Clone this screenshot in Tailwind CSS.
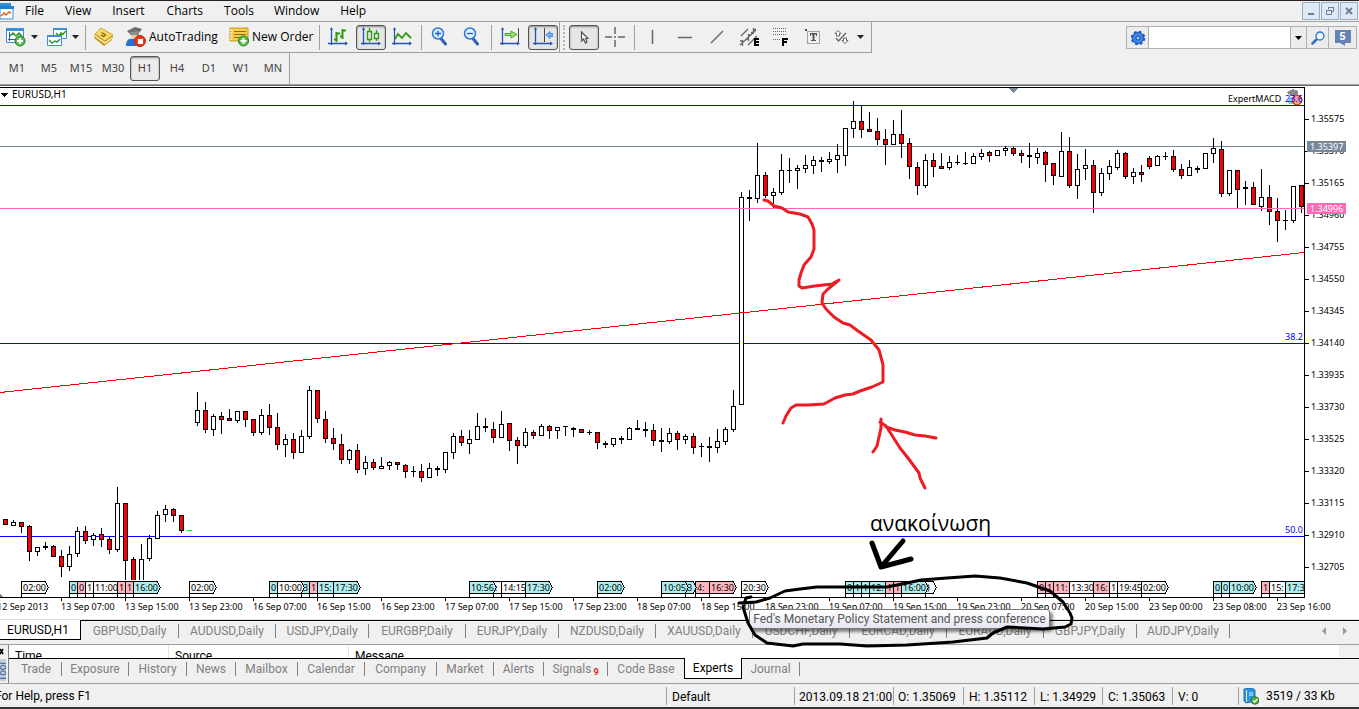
<!DOCTYPE html>
<html lang="en">
<head>
<meta charset="utf-8">
<title>EURUSD,H1</title>
<script src="https://cdn.jsdelivr.net/npm/@tailwindcss/browser@4"></script>
</head>
<body class="relative flex h-screen flex-col overflow-hidden border-t border-[#2b2124] bg-[#f0f0f0] font-['Roboto','Noto_Sans',sans-serif] text-[12px] text-black">

<!-- Menu bar -->
<header class="flex h-[21px] shrink-0 items-center border-b border-[#a0a0a0] font-['Open_Sans','Noto_Sans',sans-serif]">
  <svg class="h-5 w-[14px]" viewBox="0 0 14 20"><path d="M0 2h11v4H0z" fill="#2f8fd8"/><path d="M0 6h13v12H0z" fill="#fff" stroke="#2f8fd8"/><path d="M0 5h14v3H0z" fill="#1f7fd0"/><path d="M1 15l3-3 2 2 3-3 2 1" fill="none" stroke="#e8622a" stroke-width="1.5"/></svg>
  <nav class="flex flex-1">
    <button class="px-[11px]">File</button><button class="px-[10px]">View</button><button class="px-[11px]">Insert</button><button class="px-[11px]">Charts</button><button class="px-[10px]">Tools</button><button class="px-[10px]">Window</button><button class="px-[11px]">Help</button>
  </nav>
  <div class="flex gap-px pr-px">
    <button aria-label="Minimize" class="flex h-[18px] w-[18px] items-center justify-center border border-[#9aacc2] bg-[#dfe9f5]"><svg width="10" height="10"><path d="M2 7h6v2H2z" fill="#6e7f92"/></svg></button>
    <button aria-label="Restore" class="flex h-[18px] w-[18px] items-center justify-center border border-[#9aacc2] bg-[#dfe9f5]"><svg width="10" height="10"><path d="M3.500 3.500V1.500h5v4h-2M1.500 4.500h5v4h-5z" fill="none" stroke="#6e7f92"/><path d="M1 4h6v1H1zM3 1h6v1H3z" fill="#6e7f92"/></svg></button>
    <button aria-label="Close" class="flex h-[18px] w-[18px] items-center justify-center border border-[#9aacc2] bg-[#dfe9f5]"><svg width="10" height="10"><path d="M2 2l6 6M8 2l-6 6" stroke="#6e7f92" stroke-width="2"/></svg></button>
  </div>
</header>

<!-- Main toolbar -->
<div class="flex h-[31px] shrink-0">
  <div class="flex h-[31px] w-[560px] shrink-0 items-center border-r border-b border-[#a0a0a0]">
    <button aria-label="New chart" class="ml-[6px] flex w-[41px] items-center gap-[5px]">
      <svg width="20" height="20"><path d="M.5 1.500h17v14H.5z" fill="#fff" stroke="#3a8fd8"/><path d="M0 1h18v3H0z" fill="#3a8fd8"/><path d="M3.500 5v9M2 12.500h13" stroke="#2a62b8" fill="none"/><path d="M4 9l3-3 3 3 3-3 3 3" stroke="#2f9a20" fill="none" stroke-width="1.500"/><circle cx="14" cy="14" r="5" fill="#58bf4e" stroke="#23801f"/><path d="M14 11v6M11 14h6" stroke="#fff" stroke-width="2"/></svg>
      <svg width="8" height="4"><path d="M0 0h7L3.500 4z" fill="#222"/></svg>
    </button>
    <button aria-label="Profiles" class="flex w-[38px] items-center gap-[5px]">
      <svg width="20" height="20"><path d="M6.500 1.500h13v10h-13z" fill="#fff" stroke="#3a8fd8"/><path d="M6 1h14v2H6z" fill="#3a8fd8"/><path d="M9 6l3 3 2-3 2 1 3-3" fill="none" stroke="#2f9a20" stroke-width="1.500"/><path d="M.5 8.500h14v10H.5z" fill="#fff" stroke="#3a8fd8"/><path d="M0 8h15v2H0z" fill="#3a8fd8"/><path d="M2 13l3 3 3-2 2 1 3-3" fill="none" stroke="#2f9a20" stroke-width="1.500"/></svg>
      <svg width="8" height="4"><path d="M0 0h7L3.500 4z" fill="#222"/></svg>
    </button>
    <span class="h-[25px] w-px bg-[#a0a0a0]"></span>
    <button aria-label="MQL editor" class="ml-[7px] w-[33px]"><svg width="21" height="20"><path d="M8 1l12 7-1 5-8 6L1 11l1-4z" fill="#c99a1c"/><path d="M8 1l12 7-8 6L2 7z" fill="#f4d96a" stroke="#c9971e" stroke-width=".7"/><path d="M2 9l10 7 7-5" stroke="#fff7d0" fill="none" stroke-width="1.300"/><path d="M8.500 5.500l4 2.500-2 1.500M8 8l3 2" fill="none" stroke="#8f6410" stroke-width="1.300"/></svg></button>
    <button class="flex w-[103px] items-center gap-[3px] font-['Open_Sans','Noto_Sans',sans-serif] whitespace-nowrap"><svg class="shrink-0" width="20" height="20"><path d="M1 4l8-4 7 2-3 4-9 1z" fill="#6b6b6b"/><path d="M4 5l9-1v4l-4 3-5-3z" fill="#8f8f8f"/><path d="M5 8h6l-1 4-3 1z" fill="#f0c99a"/><path d="M0 19c0-7 4-8 7-7l4-1v8z" fill="#2a72cf"/><circle cx="14" cy="14" r="5.500" fill="#e33b1d" stroke="#b32c12"/><path d="M12 12h5v5h-5z" fill="#fff"/></svg>AutoTrading</button>
    <button class="flex w-[90px] items-center gap-[3px] font-['Open_Sans','Noto_Sans',sans-serif] whitespace-nowrap"><svg class="shrink-0" width="20" height="20"><path d="M1 1h18v13H1z" fill="#f3cf4b" stroke="#c2961a"/><path d="M5 4.500h12M5 7.500h12M5 10.500h8" stroke="#8a6a14"/><path d="M1 3h2M1 6h2M1 9h2M1 12h2" stroke="#fff"/><circle cx="14.500" cy="14" r="5" fill="#58bf4e" stroke="#23801f"/><path d="M14.500 11v6M11.500 14h6" stroke="#fff" stroke-width="2"/></svg>New Order</button>
    <span class="h-[25px] w-px bg-[#a0a0a0]"></span>
    <button aria-label="Bar chart" class="ml-2 w-7"><svg width="20" height="20"><path d="M3.500 1v17M0 16.500h19" stroke="#2455b5" stroke-width="1.300"/><path d="M2 3l1.500-3L5 3zM17 14.500l3 2-3 2z" fill="#2455b5"/><path d="M8.500 5v10M6 12.500h2.500M8.500 6.500H12M14.500 2v10M12 9.500h2.500M14.500 3.500H18" stroke="#2f9a10" stroke-width="2" fill="none"/></svg></button>
    <button aria-label="Candlesticks" aria-pressed="true" class="flex h-[25px] w-[30px] items-center justify-center rounded-[3px] border border-[#555] bg-[#e6e6e6] shadow-[inset_0_1px_2px_#888]"><svg width="20" height="20"><path d="M2.500 1v17M0 16.500h18" stroke="#2455b5" stroke-width="1.300"/><path d="M1 3l1.500-3L4 3zM17 14.500l3 2-3 2z" fill="#2455b5"/><path d="M8.500 1v3M8.500 12v3M15.500 3v3M15.500 11v3M6.500 4.500h4v8h-4zM13.500 6.500h4v5h-4z" fill="none" stroke="#2f9a10" stroke-width="1.300"/></svg></button>
    <button aria-label="Line chart" class="ml-[6px] w-[29px]"><svg width="20" height="20"><path d="M2.500 1v17M0 16.500h19" stroke="#2455b5" stroke-width="1.300"/><path d="M1 3l1.500-3L4 3zM17 14.500l3 2-3 2z" fill="#2455b5"/><path d="M3 12l3-5 4 4 4-5 5 5" fill="none" stroke="#2f9a10" stroke-width="1.800"/></svg></button>
    <span class="h-[25px] w-px bg-[#a0a0a0]"></span>
    <button aria-label="Zoom in" class="ml-[9px] w-8"><svg width="17" height="20"><path d="M9.500 11l5 6" stroke="#2f62b8" stroke-width="3" stroke-linecap="round"/><circle cx="7" cy="6.500" r="5.500" fill="#dff0ff" stroke="#2d78d6" stroke-width="1.500"/><path d="M4 6.500h6M7 3.500v6" stroke="#1e5fc4" stroke-width="1.300"/></svg></button>
    <button aria-label="Zoom out" class="w-7"><svg width="17" height="20"><path d="M9.500 11l5 6" stroke="#2f62b8" stroke-width="3" stroke-linecap="round"/><circle cx="7" cy="6.500" r="5.500" fill="#dff0ff" stroke="#2d78d6" stroke-width="1.500"/><path d="M4 6.500h6" stroke="#1e5fc4" stroke-width="1.300"/></svg></button>
    <span class="h-[25px] w-px bg-[#a0a0a0]"></span>
    <button aria-label="Auto scroll" class="ml-2 w-7"><svg width="20" height="20"><path d="M2.500 1v17M0 16.500h18" stroke="#2455b5" stroke-width="1.300"/><path d="M1 3l1.500-3L4 3zM17 14.500l3 2-3 2z" fill="#2455b5"/><path d="M18.500 1v14" stroke="#444"/><path d="M5 6.500h6V4l6 3.500-6 3.500V8.500H5z" fill="#9be070" stroke="#2f9a10" stroke-width=".8"/></svg></button>
    <button aria-label="Chart shift" aria-pressed="true" class="flex h-[25px] w-[30px] items-center justify-center rounded-[3px] border border-[#555] bg-[#e6e6e6] shadow-[inset_0_1px_2px_#888]"><svg width="20" height="20"><path d="M2.500 1v17M0 16.500h18" stroke="#2455b5" stroke-width="1.300"/><path d="M1 3l1.500-3L4 3zM17 14.500l3 2-3 2z" fill="#2455b5"/><path d="M11.500 1v14" stroke="#444"/><path d="M20 6.500h-3V4.500l-4 3.500 4 3.500V9.500h3z" fill="#7db4ef" stroke="#2d78d6" stroke-width=".8"/></svg></button>
  </div>
  <div class="flex h-[31px] w-[312px] shrink-0 items-center border-r border-b border-[#a0a0a0]">
    <span class="ml-[2px] h-[25px] w-[3px] border-r-2 border-dotted border-[#b4b4b4]"></span>
    <button aria-label="Cursor" aria-pressed="true" class="ml-1 flex h-[25px] w-[30px] items-center justify-center rounded-[3px] border border-[#555] bg-[#e6e6e6] shadow-[inset_0_1px_2px_#888]"><svg width="12" height="16"><path d="M3.500 3v9l2-2 2 4 1.500-1-1.500-3.500h2.500z" fill="#fff" stroke="#555" stroke-width="1.200"/></svg></button>
    <button aria-label="Crosshair" class="ml-[6px] w-[29px]"><svg width="20" height="20"><path d="M10 0v7M10 13v7M0 10h7M13 10h7M9 10h2" stroke="#666" stroke-width="1.500"/></svg></button>
    <span class="h-[25px] w-px bg-[#a0a0a0]"></span>
    <button aria-label="Vertical line" class="flex w-[34px] justify-center"><svg width="10" height="14"><path d="M5.500 0v14" stroke="#666" stroke-width="1.500"/></svg></button>
    <button aria-label="Horizontal line" class="flex w-8 justify-center"><svg width="14" height="10"><path d="M0 5.500h14" stroke="#666" stroke-width="1.500"/></svg></button>
    <button aria-label="Trendline" class="flex w-8 justify-center"><svg width="14" height="14"><path d="M1 13L13 1" stroke="#666" stroke-width="1.500"/></svg></button>
    <button aria-label="Equidistant channel" class="flex w-8 justify-center"><svg width="20" height="20"><path d="M2 9l7-7M1 18L17 3M9 18l9-9M3.500 19v-6M1 14h2.500M9.500 14V7M7 12h2.500M9.500 8H12M14.500 7V1M12 5.500h2.500M14.500 2.500H17" stroke="#666" stroke-width="1.300" fill="none"/><path d="M15 11h5v2h-3v1h3v2h-3v1h3v2h-5z" fill="#000"/></svg></button>
    <button aria-label="Fibonacci retracement" class="flex w-8 justify-center"><svg width="16" height="20"><path d="M0 1.500h14M0 4.500h14M0 7.500h14M0 12.500h8" stroke="#666" stroke-width="1" stroke-dasharray="1 1"/><path d="M9 11h6v2h-4v1h3v2h-3v3H9z" fill="#000"/></svg></button>
    <button aria-label="Text label" class="flex w-8 justify-center"><svg width="16" height="16"><path d="M2.500 2.500h12v12h-12z" fill="none" stroke="#555" stroke-dasharray="1 1"/><path d="M0 0h2v2H0z" fill="#444"/><path d="M5 4h7v3h-1V5.500H9.500V11H11v1H6v-1h1.500V5.500H6V7H5z" fill="#555"/></svg></button>
    <button aria-label="Arrows" class="flex w-10 items-center justify-center gap-2"><svg width="15" height="16"><path d="M4 1.500L7 4.500H5.500V7h-3V4.500H1zM11 14.500l3-3h-1.500V9h-3v2.500H8z" fill="#fff" stroke="#666"/><path d="M2 9l2.500 3L12 4" fill="none" stroke="#666" stroke-width="1.300"/></svg><svg width="8" height="4"><path d="M0 0h7L3.500 4z" fill="#222"/></svg></button>
  </div>
  <div class="flex flex-1 items-center justify-end pr-[2px]">
    <form class="flex h-[23px] border border-[#b0b0b0] bg-[#ececec]" onsubmit="return false">
      <button aria-label="Search options" class="flex w-[22px] items-center justify-center border-r border-[#b0b0b0]"><svg width="16" height="16"><circle cx="8" cy="8" r="6" fill="#2d7be0" stroke="#1c58b8" stroke-width="2.500" stroke-dasharray="2.700 2"/><circle cx="8" cy="8" r="5.500" fill="#3f86e0" stroke="#1c58b8" stroke-width=".8"/><circle cx="8" cy="8" r="2" fill="#a8ccf5" stroke="#174c9c"/></svg></button>
      <input aria-label="Search" class="w-[141px] bg-white outline-none">
      <button aria-label="History" class="flex w-4 items-center justify-center border-l border-[#b0b0b0]"><svg width="7" height="4"><path d="M0 0h7L3.500 4z" fill="#000"/></svg></button>
      <button aria-label="Find" class="flex w-[22px] items-center justify-center border-l border-[#b0b0b0]"><svg width="14" height="14"><path d="M5.500 8.500L1.500 12.500" stroke="#2d6fd0" stroke-width="2.500" stroke-linecap="round"/><circle cx="9" cy="5" r="4" fill="#f2f8ff" stroke="#2d6fd0" stroke-width="1.300"/></svg></button>
      <button aria-label="Messages" class="flex w-7 flex-col items-center justify-center border-l border-[#b0b0b0]"><span class="flex h-[13px] w-4 items-center justify-center bg-[#6482b4] text-[11px] leading-none font-bold text-white">5</span><svg width="6" height="3"><path d="M0 0h5v3z" fill="#6482b4"/></svg></button>
    </form>
  </div>
</div>

<!-- Timeframes -->
<div class="flex h-8 shrink-0 border-b border-[#a0a0a0] font-['Noto_Sans',sans-serif] text-[11px] text-[#444]">
  <div class="flex items-center border-r border-[#a0a0a0] pl-px">
    <button class="w-8">M1</button><button class="w-8">M5</button><button class="w-8">M15</button><button class="w-8">M30</button><button aria-pressed="true" class="mx-px h-[25px] w-[30px] rounded-[3px] border border-[#555] bg-[#ebebeb] shadow-[inset_0_1px_2px_#888]">H1</button><button class="w-8">H4</button><button class="w-8">D1</button><button class="w-8">W1</button><button class="w-8">MN</button>
  </div>
</div>

<!-- Chart window -->
<main class="flex min-h-0 flex-1 flex-col overflow-hidden border-t border-b border-t-[#696969] border-b-[#e0e0e0] bg-white font-['Noto_Sans',sans-serif]">
  <div class="flex min-h-0 flex-1 pt-px">
    <svg id="plot" class="h-full min-w-0 flex-1 border-t border-b border-black" aria-label="EURUSD hourly candles"></svg>
    <div class="relative w-[55px] shrink-0 border-l border-black text-[9px]">
      <div class="flex flex-col pt-4" id="prices"></div>
      <span class="absolute top-[54px] left-[2px] flex h-[11px] w-[39px] items-center bg-[#778899] pl-[3px] text-white">1.35397</span>
      <span class="absolute top-[116px] left-[2px] flex h-[11px] w-[39px] items-center bg-[#ff69b4] pl-[3px] text-white">1.34996</span>
    </div>
  </div>
  <div class="-ml-[3px] flex h-[21px] shrink-0 text-[9px]" id="times"></div>
</main>

<!-- Chart tabs -->
<nav class="flex h-[25px] shrink-0 items-start border-b border-[#a0a0a0] text-[#808080]">
  <button class="h-5 w-[81px] shrink-0 border-r border-b border-black bg-white pr-1 text-black">EURUSD,H1</button>
  <div class="flex h-[21px] min-w-0 flex-1 items-center border-t border-black">
    <button class="h-[14px] w-[98px] shrink-0 border-r border-[#808080] leading-[14px]">GBPUSD,Daily</button><button class="h-[14px] w-[97px] shrink-0 border-r border-[#808080] leading-[14px]">AUDUSD,Daily</button><button class="h-[14px] w-[93px] shrink-0 border-r border-[#808080] leading-[14px]">USDJPY,Daily</button><button class="h-[14px] w-[97px] shrink-0 border-r border-[#808080] leading-[14px]">EURGBP,Daily</button><button class="h-[14px] w-[93px] shrink-0 border-r border-[#808080] leading-[14px]">EURJPY,Daily</button><button class="h-[14px] w-[97px] shrink-0 border-r border-[#808080] leading-[14px]">NZDUSD,Daily</button><button class="h-[14px] w-[97px] shrink-0 border-r border-[#808080] leading-[14px]">XAUUSD,Daily</button><button class="h-[14px] w-[97px] shrink-0 border-r border-[#808080] leading-[14px]">USDCHF,Daily</button><button class="h-[14px] w-[97px] shrink-0 border-r border-[#808080] leading-[14px]">EURCAD,Daily</button><button class="h-[14px] w-[97px] shrink-0 border-r border-[#808080] leading-[14px]">EURAUD,Daily</button><button class="h-[14px] w-[93px] shrink-0 border-r border-[#808080] leading-[14px]">GBPJPY,Daily</button><button class="h-[14px] w-[93px] shrink-0 border-r border-[#808080] leading-[14px]">AUDJPY,Daily</button>
    <div class="flex flex-1 justify-end gap-[17px] pr-3">
      <button aria-label="Scroll left"><svg width="4" height="8"><path d="M4 0v8L0 4z" fill="#999"/></svg></button>
      <button aria-label="Scroll right"><svg width="4" height="8"><path d="M0 0v8l4-4z" fill="#999"/></svg></button>
    </div>
  </div>
</nav>

<!-- Terminal panel -->
<section class="flex h-[39px] shrink-0 border-b border-[#a0a0a0]">
  <div class="flex w-2 shrink-0 flex-col overflow-hidden">
    <button aria-label="Close panel" class="h-[11px]"><svg width="4" height="8"><path d="M0 2l3 5M3 2L0 7" stroke="#000" stroke-width="1.500"/></svg></button>
    <span class="mt-[3px] h-[22px] w-[6px] bg-[#c3cfdf] text-[10px] leading-[5px] text-[#3c5a84] [writing-mode:sideways-lr]">Tool</span>
  </div>
  <div class="flex min-w-0 flex-1 flex-col border-l border-[#808080]">
    <div class="flex h-[13px] shrink-0 overflow-hidden bg-white leading-[22px]">
      <span class="w-[160px] border-r border-[#e4e4e4] pl-[6px]">Time</span><span class="w-[180px] border-r border-[#e4e4e4] pl-[6px]">Source</span><span class="flex-1 pl-[6px]">Message</span><span class="w-5 bg-[#f0f0f0]"></span>
    </div>
    <nav class="flex h-[22px] shrink-0 border-t border-black pl-[2px] text-[#808080]">
      <button class="mt-[3px] h-[14px] w-[51px] border-r border-[#808080] leading-[12px]">Trade</button><button class="mt-[3px] h-[14px] w-[67px] border-r border-[#808080] leading-[12px]">Exposure</button><button class="mt-[3px] h-[14px] w-[58px] border-r border-[#808080] leading-[12px]">History</button><button class="mt-[3px] h-[14px] w-[49px] border-r border-[#808080] leading-[12px]">News</button><button class="mt-[3px] h-[14px] w-[62px] border-r border-[#808080] leading-[12px]">Mailbox</button><button class="mt-[3px] h-[14px] w-[67px] border-r border-[#808080] leading-[12px]">Calendar</button><button class="mt-[3px] h-[14px] w-[72px] border-r border-[#808080] leading-[12px]">Company</button><button class="mt-[3px] h-[14px] w-[57px] border-r border-[#808080] leading-[12px]">Market</button><button class="mt-[3px] h-[14px] w-[50px] border-r border-[#808080] leading-[12px]">Alerts</button><button class="mt-[3px] h-[14px] w-[64px] border-r border-[#808080] leading-[12px]">Signals<sub class="pl-[2px] text-[9px] leading-none font-bold text-[#e02020]">9</sub></button><button class="mt-[3px] h-[14px] w-[76px] leading-[12px]">Code Base</button><button class="-mt-px h-[21px] w-[58px] border-r border-b border-l border-black bg-white leading-[18px] text-black">Experts</button><button class="mt-[3px] h-[14px] w-[58px] border-r border-[#808080] leading-[12px]">Journal</button>
    </nav>
  </div>
</section>

<!-- Status bar -->
<footer class="flex h-[25px] shrink-0 items-center border-b-2 border-[#333] pt-px leading-[20px] whitespace-nowrap">
  <span class="-ml-[5px] flex-1">For Help, press F1</span>
  <span class="h-[18px] w-[128px] border-l border-[#a0a0a0] pl-[5px]">Default</span>
  <span class="h-[18px] w-[99px] border-l border-[#a0a0a0] pl-1">2013.09.18 21:00</span>
  <span class="h-[18px] w-[70px] border-l border-[#a0a0a0] pl-1">O: 1.35069</span>
  <span class="h-[18px] w-[71px] border-l border-[#a0a0a0] pl-[5px]">H: 1.35112</span>
  <span class="h-[18px] w-[68px] border-l border-[#a0a0a0] pl-[5px]">L: 1.34929</span>
  <span class="h-[18px] w-[70px] border-l border-[#a0a0a0] pl-[5px]">C: 1.35063</span>
  <span class="h-[18px] w-[66px] border-l border-[#a0a0a0] pl-[5px]">V: 0</span>
  <span class="flex h-[18px] w-[121px] items-center gap-[7px] border-l border-[#a0a0a0] pl-1"><svg width="16" height="17"><path d="M1 1l8-1 3 2v11l-9 2-2-2z" fill="#2b93e0" stroke="#1870b8"/><path d="M3.500 2v12" stroke="#d8efff"/><path d="M6 5h4M6 7h4" stroke="#d8efff"/><circle cx="12" cy="12.500" r="3.800" fill="#4cae3c" stroke="#2c7f22"/><path d="M10 12.500l1.500 1.500 3-3" fill="none" stroke="#fff" stroke-width="1.300"/></svg>3519 / 33 Kb</span>
</footer>

<!-- Tooltip and hand-drawn notes floating over the chart -->
<div role="tooltip" class="absolute top-[608px] left-[749px] flex h-[20px] w-[301px] items-center justify-center rounded-[3px] border border-[#767676] bg-gradient-to-b from-white to-[#e4e5f0] whitespace-nowrap text-[#575757] shadow-[3px_3px_3px_rgba(0,0,0,0.45)]">Fed's Monetary Policy Statement and press conference</div>
<svg class="pointer-events-none absolute -top-px left-0" width="1359" height="709" fill="none" stroke-linecap="round" stroke-linejoin="round">
  <g stroke="#ed1c24" stroke-width="3">
    <path d="M764 200L768 201 774 206 782 208 788 212 800 214 808 217 812 224 814 230V249L811 257 804 265 801 273 799 280V286L802 288 815 286 832 284 839 280 828 289 823 294 822 303 826 309 834 317 843 323 850 325 858 331 871 340 879 350 882 361 883 365V382L872 387 860 391 853 394 845 395 835 398 824 404 808 405H796L791 408 786 416 783 423"/>
    <path d="M925 488L920 478 919 473 908 458 900 448 893 437 886 426 880 422M881 419V428L879 437 877 446 873 452M886 427L895 430 905 432 915 435 925 436 936 438"/>
  </g>
  <path stroke="#000" stroke-width="5" d="M872 543L881 567 903 541M881 567L911 559"/>
  <path stroke="#000" stroke-width="3" d="M739 603L756 602 770 598 785 591 800 589 817 587H887L907 583 921 580 947 578 975 576 1000 578 1027 583 1050 591 1063 602 1070 613 1072 618 1071 624 1065 627 1043 629 1025 628 1007 627 993 633 987 638 953 642 907 645 867 646 840 644H803L793 646 767 643 755 635 748 623 743 607 746 598 751 597"/>
  <text x="870" y="531" font-size="21" fill="#000" font-family="Open Sans, Noto Sans, sans-serif">ανακοίνωση</text>
</svg>

<script>
const NS = 'http://www.w3.org/2000/svg';
const plot = document.getElementById('plot');
const add = (parent, tag, attrs, text) => {
  const el = document.createElementNS(NS, tag);
  for (const k in attrs) el.setAttribute(k, attrs[k]);
  if (text) el.textContent = text;
  parent.appendChild(el);
  return el;
};
// Chart space starts 88px below the window's top
const g = add(plot, 'g', { transform: 'translate(0,-88)', 'shape-rendering': 'crispEdges' });
const line = (x1, y1, x2, y2, c) => add(g, 'path', { d: `M${x1} ${y1}L${x2} ${y2}`, stroke: c, fill: 'none' });

line(0, 105.5, 4000, 105.5, '#0000ff');
line(0, 343.5, 4000, 343.5, '#0000ff');
line(0, 536.5, 4000, 536.5, '#0000ff');
line(0, 146.5, 4000, 146.5, '#778899');

// high, body top, body bottom, low, kind (r = bearish, w = bullish, d = doji); 8px per hour
const candles = `519 519 524 524 r|520 522 525 525 w|522 522 526 532 r|525 526 551 560 r|547 547 551 555 w|542 546 547 549 d|545 546 556 556 r|550 556 566 576 r|546 554 566 570 w|527 531 553 556 w|526 531 540 543 r|533 535 539 545 w|528 534 539 546 r|537 539 549 553 r|487 503 549 551 w|503 503 560 580 r|557 559 582 580 r|544 559 582 580 w|535 538 558 560 w|511 515 538 538 w|505 509 514 521 w|508 509 515 521 r|515 515 530 532 r|0|392 410 422 425 w|402 410 429 432 r|414 416 429 435 w|412 416 419 433 r|409 418 420 420 r|411 411 420 422 w|411 411 419 426 r|419 419 432 435 r|409 415 432 434 w|404 415 427 434 r|413 427 444 449 r|434 439 444 456 w|433 439 452 458 r|430 436 452 452 w|386 390 436 438 w|390 390 418 422 r|411 419 438 442 r|428 438 443 449 r|434 444 459 463 r|449 450 459 463 w|444 450 469 472 r|456 462 468 474 w|459 462 467 469 r|457 466 468 468 w|461 462 465 469 w|462 462 464 469 r|464 465 471 477 r|466 471 471 476 d|464 471 477 481 r|463 468 477 477 w|466 468 469 475 d|452 452 469 472 w|433 436 452 458 w|430 436 442 445 r|430 439 443 453 w|413 426 439 439 w|418 426 427 431 d|422 429 437 442 r|411 424 437 437 w|423 423 440 450 r|437 440 445 463 r|428 432 445 447 w|430 432 435 438 r|424 426 435 435 w|425 426 430 438 r|427 427 430 438 w|426 426 426 435 d|427 428 429 436 d|429 429 432 432 r|430 432 432 434 d|432 432 442 448 r|441 443 444 447 d|438 438 444 446 w|436 438 439 443 d|427 428 439 439 w|420 428 429 429 d|422 429 430 436 d|424 430 440 445 r|428 440 441 451 d|428 433 441 443 w|431 433 439 449 r|434 436 439 443 w|433 436 447 453 r|443 446 446 456 d|437 446 447 461 d|429 441 447 452 w|427 429 441 444 w|390 406 429 431 w|192 197 404 404 w|190 197 198 220 d|143 175 198 202 w|172 175 195 197 r|188 192 195 207 w|154 170 192 194 w|158 170 170 182 d|165 168 170 188 w|155 165 168 172 w|156 160 165 173 w|157 160 161 171 d|152 159 161 163 w|144 155 159 172 w|128 128 155 165 w|101 121 128 137 w|106 121 129 137 r|112 129 131 131 r|118 131 139 144 r|129 139 144 164 r|120 134 144 144 w|110 134 143 157 r|138 143 166 178 r|162 167 185 194 r|154 160 185 187 w|153 160 166 176 r|153 166 168 168 r|156 162 167 169 w|155 162 162 164 d|152 163 163 164 d|153 156 163 163 w|149 153 156 159 w|151 152 155 161 r|150 150 155 155 w|146 148 150 155 w|147 148 153 155 r|150 153 155 162 r|143 155 156 167 d|148 153 157 163 w|151 152 164 181 r|163 163 175 184 r|132 151 176 176 w|137 151 185 187 r|154 169 185 198 w|149 165 168 179 w|160 165 192 212 r|168 173 192 195 w|160 166 173 179 w|150 153 167 169 w|152 153 176 178 r|168 172 176 183 w|165 172 174 181 r|156 158 166 168 r|155 156 165 165 w|152 156 156 159 d|150 156 169 171 r|164 169 175 178 r|160 167 175 175 w|166 168 169 172 d|153 153 168 168 w|138 148 153 162 w|141 149 193 196 r|170 170 193 195 w|170 170 189 207 r|181 187 188 204 d|182 187 204 204 r|169 197 206 210 w|185 197 211 224 r|198 211 220 241 r|210 220 220 229 d|186 186 220 222 w|185 185 206 212 r`;
const body = add(plot, 'svg', { width: '100%', height: 492 });
const cg = add(body, 'g', { transform: 'translate(0,-88)', 'shape-rendering': 'crispEdges' });
candles.split('|').forEach((row, i) => {
  const x = 5 + 8 * i, p = row.split(' ');
  if (p.length < 5) { add(cg, 'rect', { x: x - 2, y: 530, width: 5, height: 1, fill: '#00ff00' }); return; }
  const [h, t, b, l] = p.map(Number);
  add(cg, 'rect', { x, y: h, width: 1, height: Math.max(l - h + 1, 1), fill: '#000' });
  if (p[4] === 'd') add(cg, 'rect', { x: x - 2, y: t, width: 5, height: b - t + 1, fill: '#000' });
  else add(cg, 'rect', { x: x - 1.5, y: t + .5, width: 4, height: b - t, stroke: '#000', fill: p[4] === 'r' ? '#ff0000' : '#fff' });
});

const over = add(plot, 'g', { transform: 'translate(0,-88)', 'shape-rendering': 'crispEdges' });
add(over, 'path', { d: 'M0 208.500H4000', stroke: '#ff69b4' });
add(over, 'path', { d: 'M0 392.500L1304 252.500', stroke: '#ff0000' });
add(over, 'path', { d: 'M1008 88h10l-5 5zM0 594l3 3H0z', fill: '#778899' });
add(over, 'path', { d: 'M1 93h7l-3.500 4z', fill: '#000' });
const label = (x, y, s, c, size) => add(over, 'text', { x, y, fill: c, 'font-size': size }, s);
label(12, 98, 'EURUSD,H1', '#000', 10);
label(1228, 102, 'ExpertMACD', '#000', 9);
// Expert adviser face
add(over, 'path', { d: 'M1287 92l6-3 5 2v4l-8 1z', fill: '#8a8a8a' });
add(over, 'path', { d: 'M1288 103c0-5 3-7 6-6v7h-5z', fill: '#7cc4ea' });
add(over, 'circle', { cx: 1297, cy: 100, r: 4.500, fill: '#f2a184', stroke: '#e0431f', 'stroke-width': 1.5 });
label(1285, 102, '23.6', '#0000ff', 9);
label(1285, 340, '38.2', '#0000ff', 9);
label(1285, 533, '50.0', '#0000ff', 9);

// News flags: x, width, colour, caption, pointed end
const C = '#afeeee', P = '#ffb6c1', W = '#f8f8f8';
[[21,28,W,'02:00',1],[69,8,C,'0'],[77,8,P,'0'],[85,8,W,'1'],[93,24,W,'11:00'],[117,8,P,'1'],[125,8,P,'1'],[133,28,C,'16:00',1],
[189,28,W,'02:00',1],[269,8,C,'0'],[301,8,C,'3'],[277,28,W,'10:00',1],[309,8,P,'1'],[317,16,C,'15:'],[333,28,C,'17:30',1],
[493,8,W,':'],[469,28,C,'10:56',1],[501,24,W,'14:15'],[525,28,C,'17:30',1],[597,28,C,'02:00',1],
[695,14,P,'4:'],[685,12,C,' 3',1],[661,28,C,'10:05',1],[709,28,P,'16:30',1],[741,28,W,'20:30',1],
[845,8,C,'0'],[853,8,C,'1'],[861,8,C,'1'],[869,16,C,'12:'],[885,8,P,'1'],[893,8,P,'1'],[925,12,W,' )',1],[901,28,C,'16:00',1],
[1037,8,P,'0'],[1045,8,P,'1'],[1053,16,P,'11:'],[1069,24,W,'13:30'],[1093,16,P,'16:'],[1109,8,W,'1'],[1117,24,W,'19:45'],[1141,28,W,'02:00',1],
[1213,8,C,'0'],[1221,8,C,'0'],[1229,28,C,'10:00',1],[1261,8,P,'1'],[1269,16,W,'15:'],[1285,28,C,'17:30',1]].forEach(([x, w, c, s, pt]) => {
  const d = pt ? `M${x}.5 581.500H${x + w - 4}L${x + w - .5} 587.500 ${x + w - 4} 593.500H${x}.5z` : `M${x}.5 581.500H${x + w}V593.500H${x}.5z`;
  add(over, 'path', { d, fill: c, stroke: '#000' });
  add(over, 'path', { d: `M${x}.5 593V597`, stroke: '#000' });
  const clip = add(over, 'svg', { x: x + 1, y: 582, width: w - 1, height: 11 });
  add(clip, 'text', { x: 1, y: 9, fill: '#000', 'font-size': 9 }, s);
});

const prices = document.getElementById('prices');
for (let i = 0; i < 15; i++) {
  const row = document.createElement('div');
  row.className = 'flex h-8 items-center gap-[2px]';
  row.innerHTML = '<span class="h-px w-1 bg-black"></span>' + (1.35575 - i * 0.00205).toFixed(5);
  prices.appendChild(row);
}
const times = document.getElementById('times');
['12 Sep 2013','13 Sep 07:00','13 Sep 15:00','13 Sep 23:00','16 Sep 07:00','16 Sep 15:00','16 Sep 23:00','17 Sep 07:00','17 Sep 15:00','17 Sep 23:00','18 Sep 07:00','18 Sep 15:00','18 Sep 23:00','19 Sep 07:00','19 Sep 15:00','19 Sep 23:00','20 Sep 07:00','20 Sep 15:00','23 Sep 00:00','23 Sep 08:00','23 Sep 16:00'].forEach(s => {
  const cell = document.createElement('div');
  cell.className = 'flex w-16 shrink-0 flex-col whitespace-nowrap leading-[12px]';
  cell.innerHTML = '<span class="h-[3px] w-px bg-black"></span>' + s;
  times.appendChild(cell);
});
</script>
</body>
</html>
